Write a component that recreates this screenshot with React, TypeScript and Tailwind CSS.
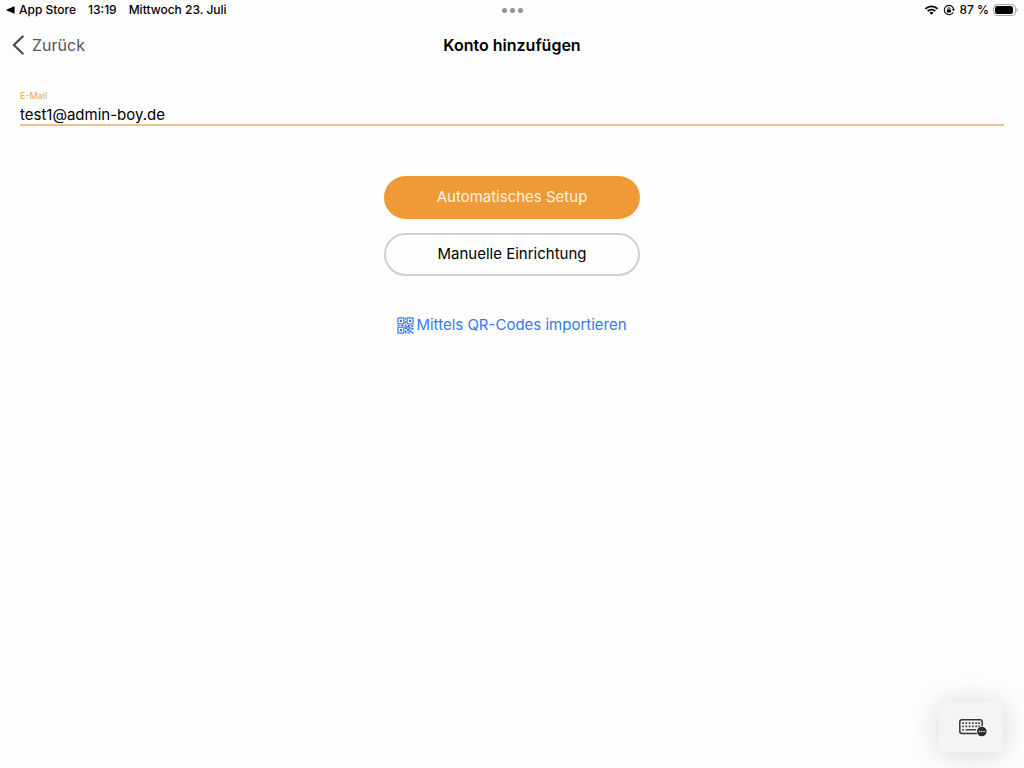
import { useState } from 'react';

/**
 * Status bar along the top edge of the screen
 */
function StatusBar() {
  return (
    <div className="grid h-5 grid-cols-[1fr_auto_1fr] items-center px-1.5 text-xs font-medium text-black">
      <div className="flex items-center gap-3 whitespace-nowrap">
        <button className="flex items-center gap-1">
          <svg viewBox="0 0 9 8" className="h-2 w-[9px]" fill="currentColor" aria-hidden="true">
            <path d="M8.6 .9v6.2c0 .5-.4.7-.8.5L.8 4.4a.4.4 0 0 1 0-.8L7.800 .4c.4-.2.8 0 .8.500z" />
          </svg>
          App Store
        </button>
        <span>13:19</span>
        <span>Mittwoch 23. Juli</span>
      </div>

      <button className="flex gap-[3px]" aria-label="Multitasking">
        <span className="h-[5px] w-[5px] rounded-full bg-[#929292]" />
        <span className="h-[5px] w-[5px] rounded-full bg-[#929292]" />
        <span className="h-[5px] w-[5px] rounded-full bg-[#929292]" />
      </button>

      <div className="flex items-center justify-end gap-1">
        <WifiIcon />
        <RotationLockIcon />
        <span className="whitespace-nowrap">87 %</span>
        <BatteryIcon />
      </div>
    </div>
  );
}

function WifiIcon() {
  return (
    <svg viewBox="0 0 16 11" className="h-[10px] w-[15px]" aria-hidden="true">
      <g fill="none" stroke="currentColor" strokeWidth="2">
        <path d="M1.3 4.2a9.5 9.5 0 0 1 13.4 0" />
        <path d="M3.8 6.8a6 6 0 0 1 8.4 0" />
      </g>
      <path d="M8 10.8 5.7 8.5a3.3 3.3 0 0 1 4.6 0z" fill="currentColor" />
    </svg>
  );
}

function RotationLockIcon() {
  return (
    <svg viewBox="0 0 12 12" className="h-3 w-3" aria-hidden="true">
      <path d="M10.2 8.2A4.7 4.7 0 1 1 10.6 5" fill="none" stroke="currentColor" strokeWidth="1.1" />
      <path d="M8.9 5h3.1l-1.5 2.2z" fill="currentColor" />
      <rect x="3.9" y="5.5" width="4" height="3" rx=".5" fill="currentColor" />
      <path d="M4.8 5.6v-.9a1.1 1.1 0 0 1 2.2 0v.9" fill="none" stroke="currentColor" strokeWidth=".8" />
    </svg>
  );
}

function BatteryIcon() {
  return (
    <svg viewBox="0 0 25 12" className="h-3 w-[25px]" aria-hidden="true">
      <rect x=".5" y=".5" width="22" height="11" rx="3.6" fill="none" stroke="#a3a3a3" />
      <rect x="2" y="2" width="18" height="8" rx="2.2" fill="#000" />
      <path d="M23.500 4v4c.8-.3 1.200-1.100 1.200-2s-.4-1.700-1.200-2z" fill="#a3a3a3" />
    </svg>
  );
}

function BackIcon() {
  return (
    <svg viewBox="0 0 12 20" className="h-5 w-3" fill="none" aria-hidden="true">
      <path
        d="M10.700 1.500 1.800 10l8.900 8.500"
        stroke="#4a4a4a"
        strokeWidth="2.200"
        strokeLinecap="round"
        strokeLinejoin="round"
      />
    </svg>
  );
}

function QrCodeIcon() {
  return (
    <svg viewBox="0 0 17 17" className="h-[17px] w-[17px]" aria-hidden="true">
      <g fill="none" stroke="currentColor" strokeWidth="1.200">
        <rect x=".9" y=".9" width="6" height="6" rx=".6" />
        <rect x="10.1" y=".9" width="6" height="6" rx=".6" />
        <rect x=".9" y="10.1" width="6" height="6" rx=".6" />
      </g>
      <g fill="currentColor">
        <path d="M2.800 2.800h2.200v2.200h-2.200zM12 2.800h2.200v2.200h-2.200zM2.800 12h2.200v2.200h-2.200z" />
        <path d="M8 .5h1v2h-1zM8 4h1v2.500h-1zM.5 8h2v1h-2zM4 8h2.500v1h-2.500zM7.500 7.500h2v2h-2z" />
        <path d="M8 10h2v2h-2zM9.500 9h2.500v1.500h-2.500zM8 13.500h1.500v3h-1.500zM10 11.500h2.500v2.500h-2.500zM12 9.500h1.500v2.500h-1.500z" />
        <path d="M11 8h2v1h-2zM14 8.200h2.500v1.500h-2.500zM14.200 10.800h2.300v2h-2.300zM12.200 13.500h2.500v1.800h-2.500zM10.500 15h2.200v1.500h-2.200zM14.700 14.800h1.800v1.700h-1.800z" />
      </g>
    </svg>
  );
}

// Left edges of the keys in the two upper rows
const KEY_COLUMNS = [3.1, 6.4, 9.7, 13, 16.3, 19.2];

function KeyboardIcon() {
  return (
    <svg viewBox="0 0 28 18" className="h-[18px] w-7" aria-hidden="true">
      <rect x=".8" y=".8" width="22.4" height="13.6" rx="2.2" fill="none" stroke="#333" strokeWidth="1.5" />
      <g fill="#444">
        {KEY_COLUMNS.map((x) => (
          <g key={x}>
            <rect x={x} y="3.3" width="1.8" height="1.8" rx=".3" />
            <rect x={x} y="6.5" width="1.8" height="1.8" rx=".3" />
          </g>
        ))}
        <rect x="3.1" y="9.9" width="1.8" height="1.8" rx=".3" />
        <rect x="6.6" y="10" width="10.5" height="1.6" rx=".5" />
      </g>
      <circle cx="22.8" cy="12.5" r="5.4" fill="#f4f4f4" />
      <circle cx="22.8" cy="12.5" r="4.8" fill="#2b2b2b" />
      <g fill="#f4f4f4">
        <circle cx="20.5" cy="12.5" r=".8" />
        <circle cx="22.8" cy="12.5" r=".8" />
        <circle cx="25.1" cy="12.5" r=".8" />
      </g>
    </svg>
  );
}

export default function App() {
  const [email, setEmail] = useState('test1@admin-boy.de');

  return (
    <div className="min-h-screen bg-[#fdfdfd] font-['Inter',sans-serif] text-black">
      <StatusBar />

      {/* Navigation */}
      <header className="grid h-[50px] grid-cols-[1fr_auto_1fr] items-center px-3">
        <button className="flex items-center gap-2 justify-self-start text-base text-[#555555]">
          <BackIcon />
          Zurück
        </button>
        <h1 className="text-base font-semibold">Konto hinzufügen</h1>
      </header>

      <main className="px-5 pt-5">
        <div className="border-b-2 border-[#f5c083]">
          <label htmlFor="email" className="block text-[9px] leading-3 text-[#f0a045]">
            E-Mail
          </label>
          <input
            id="email"
            type="email"
            value={email}
            onChange={(e) => setEmail(e.target.value)}
            className="block h-[22px] w-full bg-transparent pt-1 text-[15px] outline-none"
          />
        </div>

        <div className="mx-auto mt-[50px] flex w-64 flex-col gap-3.5 text-[15px]">
          <button className="h-[43px] rounded-full bg-[#ee9a37] text-[#fdf3e3]">
            Automatisches Setup
          </button>
          <button className="h-[43px] rounded-full border-2 border-[#d0d0d0]">
            Manuelle Einrichtung
          </button>
        </div>

        <div className="mt-[38px] flex justify-center">
          <a href="#qr-import" className="flex items-center gap-0.5 text-[15px] text-[#3578ee]">
            <QrCodeIcon />
            Mittels QR-Codes importieren
          </a>
        </div>
      </main>

      {/* Floating keyboard shortcut */}
      <button
        aria-label="Tastatur"
        className="fixed bottom-4 right-[21px] flex h-[50px] w-16 items-center justify-center rounded-lg bg-[#f4f4f4] pl-1 pt-0.5 shadow-[0_2px_28px_rgba(0,0,0,0.16)]"
      >
        <KeyboardIcon />
      </button>
    </div>
  );
}
